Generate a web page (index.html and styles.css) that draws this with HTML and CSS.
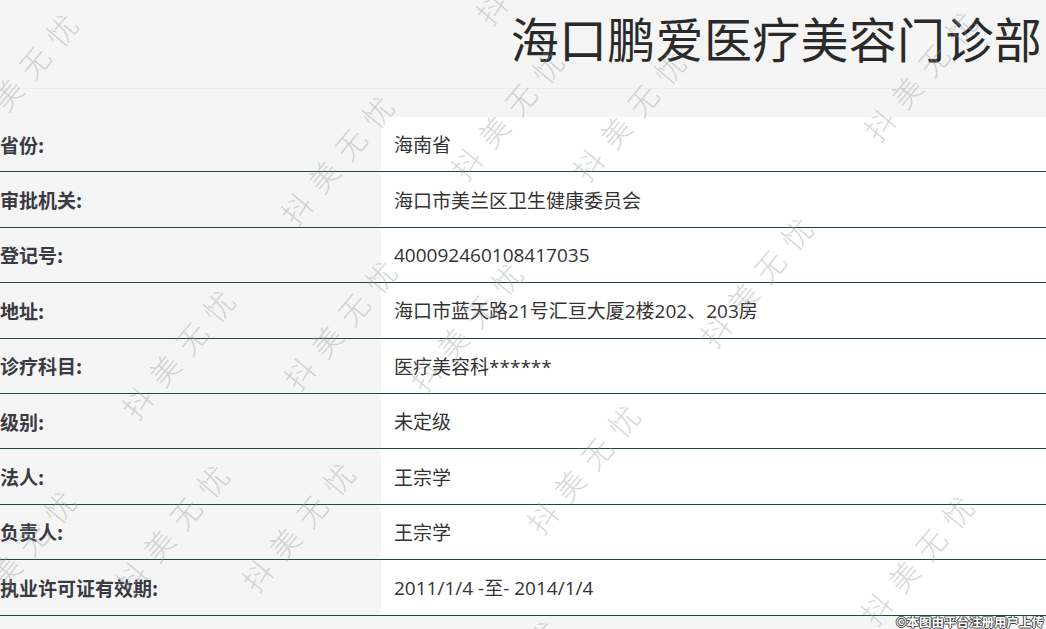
FILE: index.html
```html
<!DOCTYPE html>
<html lang="zh-CN">
<head>
<meta charset="utf-8">
<title>海口鹏爱医疗美容门诊部</title>
<link rel="stylesheet" href="styles.css">
</head>
<body>
<div class="page">
  <header class="head">
    <h1 class="title">海口鹏爱医疗美容门诊部</h1>
  </header>
  <div class="gap"></div>
  <div class="table">
    <div class="row"><div class="label">省份:</div><div class="value">海南省</div></div>
    <div class="row"><div class="label">审批机关:</div><div class="value">海口市美兰区卫生健康委员会</div></div>
    <div class="row"><div class="label">登记号:</div><div class="value">400092460108417035</div></div>
    <div class="row"><div class="label">地址:</div><div class="value">海口市蓝天路21号汇亘大厦2楼202、203房</div></div>
    <div class="row"><div class="label">诊疗科目:</div><div class="value">医疗美容科******</div></div>
    <div class="row"><div class="label">级别:</div><div class="value">未定级</div></div>
    <div class="row"><div class="label">法人:</div><div class="value">王宗学</div></div>
    <div class="row"><div class="label">负责人:</div><div class="value">王宗学</div></div>
    <div class="row"><div class="label">执业许可证有效期:</div><div class="value">2011/1/4 -至- 2014/1/4</div></div>
  </div>

  <div class="marks" aria-hidden="true">
    <span class="wm" style="left:24px;top:73px">抖美无忧</span>
    <span class="wm" style="left:340px;top:155px">抖美无忧</span>
    <span class="wm" style="left:510px;top:110px">抖美无忧</span>
    <span class="wm" style="left:535px;top:-45px">抖美无忧</span>
    <span class="wm" style="left:632px;top:111px">抖美无忧</span>
    <span class="wm" style="left:923px;top:71px">抖美无忧</span>
    <span class="wm" style="left:181px;top:349px">抖美无忧</span>
    <span class="wm" style="left:343px;top:320px">抖美无忧</span>
    <span class="wm" style="left:469px;top:322px">抖美无忧</span>
    <span class="wm" style="left:759px;top:277px">抖美无忧</span>
    <span class="wm" style="left:586px;top:464px">抖美无忧</span>
    <span class="wm" style="left:920px;top:555px">抖美无忧</span>
    <span class="wm" style="left:22px;top:550px">抖美无忧</span>
    <span class="wm" style="left:175px;top:524px">抖美无忧</span>
    <span class="wm" style="left:301px;top:522px">抖美无忧</span>
    <span class="wm" style="left:505px;top:680px">抖美无忧</span>
  </div>
  <div class="credit">©本图由平台注册用户上传</div>
</div>
</body>
</html>
```
FILE: styles.css
```css
html, body {
  margin: 0;
  padding: 0;
  background: #f5f5f5;
}
body {
  font-family: "Noto Sans CJK SC", "Noto Sans", sans-serif;
  color: #333;
  overflow: hidden;
}
.page {
  position: relative;
  width: 1046px;
  height: 629px;
  overflow: hidden;
}
.head {
  height: 88px;
  border-bottom: 1px solid #ebebeb;
  display: flex;
  justify-content: flex-end;
  align-items: center;
  padding-right: 4px;
}
.title {
  margin: 0;
  font-size: 48px;
  font-weight: 400;
  color: #2a2a2a;
  line-height: 1;
  letter-spacing: 0.3px;
  transform: translateY(-7px);
}
.gap {
  height: 28px;
}
.table {
  display: flex;
  flex-direction: column;
}
.row {
  display: grid;
  grid-template-columns: 381px 1fr;
  height: 55.4px;
  box-sizing: border-box;
  border-bottom: 1px solid #1f4a3d;
}
.label {
  display: flex;
  align-items: center;
  font-size: 19px;
  font-weight: 700;
  color: #3a3a44;
  padding-left: 0;
}
.value {
  display: flex;
  align-items: center;
  background: #fff;
  padding-left: 13px;
  font-family: "Open Sans", "Noto Sans CJK SC", sans-serif;
  font-size: 19px;
  color: #333;
}
.marks {
  position: absolute;
  inset: 0;
  pointer-events: none;
}
.wm {
  position: absolute;
  transform: translate(-50%, -50%) rotate(-50deg);
  font-size: 30px;
  letter-spacing: 12px;
  font-weight: 300;
  color: rgba(150, 150, 150, 0.4);
  white-space: nowrap;
  line-height: 1;
}
.credit {
  position: absolute;
  right: 2px;
  bottom: 1px;
  font-size: 12.5px;
  font-weight: 700;
  color: #fff;
  line-height: 1;
  text-shadow: 1px 0 0 #444, -1px 0 0 #444, 0 1px 0 #444, 0 -1px 0 #444;
}
```
